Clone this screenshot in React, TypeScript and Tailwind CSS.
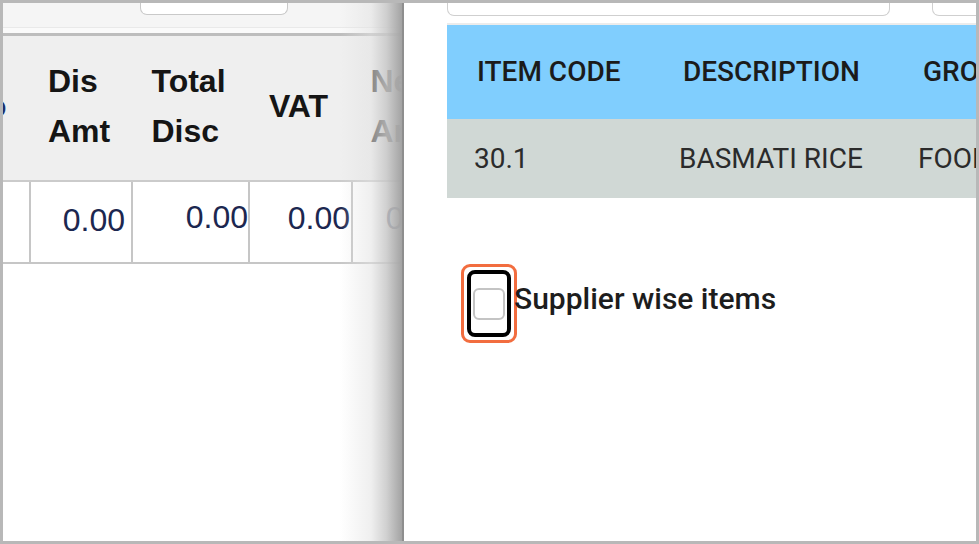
import type * as React from "react";

const leftCols = [
  { w: "w-[28px]", head: ["o"], value: "" },
  { w: "w-[102px]", head: ["Dis", "Amt"], value: "0.00", pr: "pr-[6px]", pt: "pt-[22px]" },
  { w: "w-[117px]", head: ["Total", "Disc"], value: "0.00", pr: "pr-0", pt: "pt-[19px]" },
  { w: "w-[103px]", head: ["VAT"], value: "0.00", pr: "pr-[1px]", pt: "pt-[20px]" },
  { w: "w-[103px]", head: ["Net", "Amt"], value: "0.00", pr: "pr-[6px]", pt: "pt-[20px]" },
];

const LeftPane: React.FC = () => (
  <div className="relative w-[399px] shrink-0 overflow-hidden bg-white">
    <div className="h-[24px] bg-[#f5f5f5]">
      <div className="ml-[137px] h-[12px] w-[148px] rounded-b-[7px] border border-t-0 border-[#c9c9c9] bg-white" />
    </div>
    <div className="h-[6px] border-t border-[#e9e9e9] bg-[#fafafa]" />
    <div className="h-[3px] bg-[#bdbdbd]" />
    <div className="flex h-[146px] w-[600px] border-b-2 border-[#cbcbcb] bg-[#efefef] pb-[4px] font-['Liberation_Sans',Arial,sans-serif] text-[32px] font-bold leading-[50px] text-[#151515]">
      {leftCols.map((c, i) => (
        <div
          key={i}
          className={`${c.w} flex shrink-0 items-center ${i === 0 ? "justify-start overflow-hidden" : "justify-center pr-[6px]"}`}
        >
          <div className={i === 0 ? "ml-[-16px] text-[#1f2f6a]" : ""}>
            {c.head.map((h) => (
              <div key={h}>{h}</div>
            ))}
          </div>
        </div>
      ))}
    </div>
    <div className="flex h-[82px] w-[600px] border-b-2 border-[#c6c6c6] font-['Liberation_Sans',Arial,sans-serif] text-[32px] leading-none text-[#1c2750]">
      {leftCols.map((c, i) => (
        <div
          key={i}
          className={`${c.w} shrink-0 overflow-hidden border-r-2 border-[#c6c6c6] text-right ${c.pr ?? ""} ${c.pt ?? ""}`}
        >
          {c.value}
        </div>
      ))}
    </div>
    {/* drawer shadow falling over the list */}
    <div className="pointer-events-none absolute inset-y-0 right-0 w-[62px] bg-[linear-gradient(to_right,rgba(236,236,236,0)_0%,rgba(226,226,226,0.55)_50%,rgba(200,200,200,0.85)_75%,rgba(163,163,163,1)_100%)]" />
  </div>
);

const RightPane: React.FC = () => (
  <div className="flex-1 overflow-hidden border-l-2 border-[#8e8e8e] bg-white pl-[43px]">
    <div className="flex h-[13px] gap-[42px]">
      <div className="h-full w-[443px] shrink-0 rounded-b-[7px] border border-t-0 border-[#cfcfcf]" />
      <div className="h-full w-[80px] shrink-0 rounded-bl-[7px] border border-t-0 border-[#cfcfcf]" />
    </div>
    <div className="mt-[7px] h-[2px] w-[600px] bg-[#ececec]" />
    <div className="w-[600px] font-['Roboto',sans-serif]">
      <div className="flex h-[94px] items-center bg-[#80cefe] text-[28px] font-medium text-[#1b1b1b]">
        <div className="w-[206px] shrink-0 pl-[30px]">ITEM CODE</div>
        <div className="w-[240px] shrink-0 pl-[30px]">DESCRIPTION</div>
        <div className="shrink-0 pl-[30px]">GROUP</div>
      </div>
      <div className="flex h-[79px] items-center bg-[#d0d8d5] text-[28px] text-[#2b2b2b]">
        <div className="w-[206px] shrink-0 pl-[27px]">30.1</div>
        <div className="w-[240px] shrink-0 pl-[26px]">BASMATI RICE</div>
        <div className="shrink-0 pl-[25px]">FOOD</div>
      </div>
    </div>
    <div className="ml-[14px] mt-[66px] flex items-start">
      <div className="flex h-[79px] w-[56px] shrink-0 items-center justify-center rounded-[9px] border-[3px] border-[#f26d3f] bg-white">
        <div className="flex h-[67px] w-[44px] items-center justify-center rounded-[8px] border-4 border-black">
          <div className="h-[32px] w-[32px] rounded-[6px] border-2 border-[#c4c4c4] bg-white" />
        </div>
      </div>
      <span className="ml-[-3px] mt-[16px] font-['Roboto',sans-serif] text-[30px] font-medium leading-[38px] text-[#1d1d1d]">
        Supplier wise items
      </span>
    </div>
  </div>
);

export default function App() {
  return (
    <div className="flex h-[544px] w-[979px] overflow-hidden border-[3px] border-[#b8b8b8] bg-white">
      <LeftPane />
      <RightPane />
    </div>
  );
}
